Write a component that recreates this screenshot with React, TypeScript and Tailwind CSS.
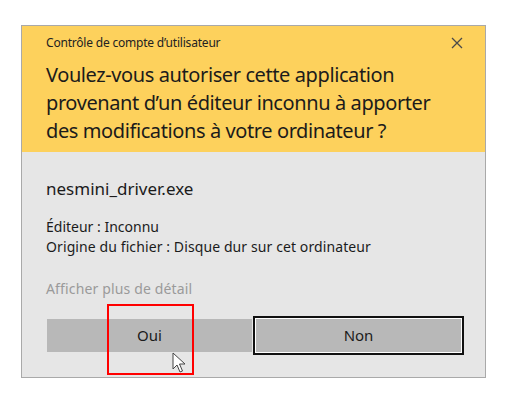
import React from "react";

export default function App() {
  return (
    <div
      className="relative w-[520px] h-[400px] bg-white overflow-hidden"
      style={{ fontFamily: '"Noto Sans", "Open Sans", sans-serif' }}
    >
      <div className="absolute left-[21px] top-[25px] w-[465px] h-[353px] border border-[#a9a9a9] bg-[#e6e6e6] flex flex-col">
        <div className="bg-[#fdd15c] h-[126px] px-[24px] pt-[9px] flex flex-col">
          <div className="flex items-center justify-between">
            <span className="text-[12px] leading-[16px] tracking-[-0.2px] text-[#222]">Contrôle de compte d’utilisateur</span>
            <svg width="12" height="12" viewBox="0 0 12 12" className="mr-[-2px]">
              <path d="M1 1 L11 11 M11 1 L1 11" stroke="#4a4a4a" strokeWidth="1.3" fill="none" />
            </svg>
          </div>
          <div className="mt-[10px] text-[20px] leading-[28px] tracking-[-0.4px] text-[#1b1b1b]">
            Voulez-vous autoriser cette application<br />
            provenant d’un éditeur inconnu à apporter<br />
            des modifications à votre ordinateur ?
          </div>
        </div>
        <div className="px-[24px] pt-[26px] flex flex-col text-[#1b1b1b]">
          <div className="text-[17px] leading-[22px]">nesmini_driver.exe</div>
          <div className="mt-[17px] text-[14px] leading-[20px]">Éditeur : Inconnu</div>
          <div className="text-[14px] leading-[20px] tracking-[0.1px]">Origine du fichier : Disque dur sur cet ordinateur</div>
          <div className="mt-[22px] text-[14px] leading-[20px] tracking-[0.15px] text-[#9a9a9a]">Afficher plus de détail</div>
        </div>
        <div className="pl-[25px] pr-[24px] mt-[20px] flex gap-[4px]">
          <div className="w-[205px] h-[33px] bg-[#b8b8b8] flex items-center justify-center text-[15px] text-[#1b1b1b]">
            Oui
          </div>
          <div className="w-[205px] h-[33px] bg-[#b8b8b8] flex items-center justify-center text-[15px] text-[#1b1b1b] shadow-[0_0_0_1px_#ffffff,0_0_0_3px_#111111]">
            Non
          </div>
        </div>
      </div>
      <div className="absolute left-[107px] top-[304px] w-[87px] h-[71px] border-2 border-[#ff0000]" />
      <svg className="absolute left-[172px] top-[352px]" width="14" height="22" viewBox="0 0 14 22">
        <path d="M1 1 L1 17 L5 13 L8 20 L10.5 19 L7.5 12 L13 12 Z" fill="#ffffff" stroke="#444" strokeWidth="1" strokeLinejoin="round" />
      </svg>
    </div>
  );
}
